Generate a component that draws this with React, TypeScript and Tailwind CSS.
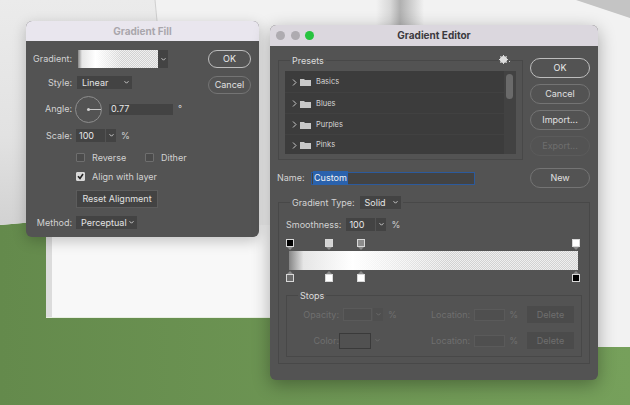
import type { ReactNode } from 'react';

/* Photoshop "Gradient Fill" + "Gradient Editor" dialogs over a paper/green photo */

const DITHER =
  'bg-[linear-gradient(90deg,#858585_0%,#e6e6e6_5%,#ffffff_22%,rgba(255,255,255,0)_55%),repeating-conic-gradient(#d2d2d2_0_25%,#f0f0f0_0_50%)] bg-[length:100%_100%,2px_2px]';

function Chevron({ dim = false }: { dim?: boolean }) {
  return (
    <svg width="7" height="5" viewBox="0 0 7 5" className="shrink-0">
      <path d="M1.5 1.2l2 2 2-2" fill="none" stroke={dim ? '#6a6a6a' : '#c8c8c8'} strokeWidth="1" />
    </svg>
  );
}

function PillButton({ label, primary, dim, className = '' }: { label: string; primary?: boolean; dim?: boolean; className?: string }) {
  return (
    <div
      className={`flex items-center justify-center rounded-full border ${
        primary ? 'border-[#bdbdbd] text-[#ececec]' : dim ? 'border-[#5b5b5b] text-[#6e6e6e]' : 'border-[#747474] text-[#e0e0e0]'
      } ${className}`}
    >
      {label}
    </div>
  );
}

function Select({ label, className = '' }: { label: string; className?: string }) {
  return (
    <div className={`flex h-[13px] items-center justify-between bg-[#434343] pl-[5px] pr-[2px] text-[#e4e4e4] ${className}`}>
      <span>{label}</span>
      <Chevron />
    </div>
  );
}

function Combo({ value, dim = false }: { value: string; dim?: boolean }) {
  return (
    <div className="flex h-[13px] items-center gap-px">
      <div className={`flex h-full w-[29px] items-center pl-[3px] ${dim ? 'border border-[#5a5a5a] bg-[#4f4f4f]' : 'bg-[#434343] text-[#e8e8e8]'}`}>{value}</div>
      <div className={`flex h-full w-[10px] items-center justify-center ${dim ? 'bg-[#4f4f4f]' : 'bg-[#434343]'}`}>
        <Chevron dim={dim} />
      </div>
    </div>
  );
}

function Checkbox({ checked = false }: { checked?: boolean }) {
  return (
    <div className={`flex size-[9px] items-center justify-center rounded-[1px] border ${checked ? 'border-[#d8d8d8] bg-[#d8d8d8]' : 'border-[#6e6e6e] bg-[#4b4b4b]'}`}>
      {checked && (
        <svg width="7" height="7" viewBox="0 0 7 7">
          <path d="M1 3.2l2 2.2L6 1" fill="none" stroke="#222" strokeWidth="1.6" />
        </svg>
      )}
    </div>
  );
}

function TitleDots() {
  return (
    <div className="absolute left-[6px] top-[6px] flex gap-[5.5px]">
      <div className="size-[9px] rounded-full bg-[#aeabb0]" />
      <div className="size-[9px] rounded-full bg-[#aeabb0]" />
      <div className="size-[9px] rounded-full bg-[#27c33f]" />
    </div>
  );
}

function Folder() {
  return (
    <svg width="11" height="8" viewBox="0 0 11 8" className="shrink-0">
      <path d="M0 1h4l1 1h6v6H0z" fill="#c8c8c8" />
    </svg>
  );
}

function PresetRow({ name, first, last }: { name: string; first?: boolean; last?: boolean }) {
  return (
    <div className={`flex items-center pl-[7px] pt-px ${first ? 'h-[21px]' : last ? 'h-[20px] border-t border-[#414141]' : 'h-[21px] border-t border-[#414141]'}`}>
      <svg width="5" height="7" viewBox="0 0 5 7" className="mr-[3px] shrink-0">
        <path d="M1 .5L4 3.5 1 6.5" fill="none" stroke="#c8c8c8" strokeWidth="1" />
      </svg>
      <Folder />
      <span className="ml-[5px] text-[7.5px] text-[#d4d4d4]">{name}</span>
    </div>
  );
}

function Stop({ left, fill, bottom }: { left: number; fill: string; bottom?: boolean }) {
  // colour/opacity stop marker on the gradient ramp
  return (
    <div className={`absolute flex -translate-x-1/2 flex-col items-center ${bottom ? 'bottom-0' : 'top-0'}`} style={{ left }}>
      {bottom && <div className="h-0 w-0 border-x-[3px] border-b-[3px] border-x-transparent border-b-[#8a8a8a]" />}
      <div className="size-[8px] border border-[#d8d8d8]" style={{ background: fill }} />
      {!bottom && <div className="h-0 w-0 border-x-[3px] border-t-[3px] border-x-transparent border-t-[#8a8a8a]" />}
    </div>
  );
}

function GroupLabel({ children, className = '' }: { children: ReactNode; className?: string }) {
  return <div className={`absolute bg-[#535353] px-[2px] ${className}`}>{children}</div>;
}

function GradientFill() {
  return (
    <div className="absolute left-[26px] top-[21px] flex h-[216px] w-[233px] flex-col overflow-hidden rounded-[6px] bg-[#535353] text-[9px] text-[#d2d2d2] shadow-[0_4px_14px_rgba(0,0,0,0.22)]">
      <div className="flex h-[20px] shrink-0 items-center justify-center bg-[#e9e6ee] text-[10px] font-bold text-[#a9a6ac]">Gradient Fill</div>
      <div className="flex flex-1">
        <div className="flex-1 pt-[9px]">
          <div className="flex h-[18px] items-center">
            <span className="w-[46px] text-right">Gradient:</span>
            <div className={`ml-[6px] h-full w-[80px] ${DITHER}`} />
            <div className="flex h-full w-[10px] items-center justify-center bg-[#434343]">
              <Chevron />
            </div>
          </div>
          <div className="mt-[8px] flex h-[13px] items-center">
            <span className="w-[46px] text-right">Style:</span>
            <Select label="Linear" className="ml-[5px] w-[55px]" />
          </div>
          <div className="mt-[7px] flex h-[26px] items-center">
            <span className="w-[46px] text-right">Angle:</span>
            <div className="relative ml-[3px] size-[27px] rounded-full border border-[#8e8e8e]">
              <div className="absolute left-[12px] top-[12px] h-px w-[13px] bg-[#c8c8c8]" />
              <div className="absolute left-[11px] top-[11px] size-[3px] rounded-full bg-[#d0d0d0]" />
            </div>
            <div className="ml-[7px] flex h-[11px] w-[64px] items-center bg-[#434343] pl-[2px] text-[#e8e8e8]">0.77</div>
            <span className="ml-[5px]">°</span>
          </div>
          <div className="mt-[7px] flex h-[13px] items-center">
            <span className="w-[46px] text-right">Scale:</span>
            <div className="ml-[4px]">
              <Combo value="100" />
            </div>
            <span className="ml-[5px]">%</span>
          </div>
          <div className="mt-[11px] flex h-[9px] items-center pl-[50px]">
            <Checkbox />
            <span className="ml-[7px] w-[53px]">Reverse</span>
            <Checkbox />
            <span className="ml-[7px]">Dither</span>
          </div>
          <div className="mt-[10px] flex h-[9px] items-center pl-[50px]">
            <Checkbox checked />
            <span className="ml-[7px]">Align with layer</span>
          </div>
          <div className="ml-[50px] mt-[9px] flex h-[18px] w-[82px] items-center justify-center border border-[#5c5c5c] bg-[#434343] text-[#e0e0e0]">Reset Alignment</div>
          <div className="mt-[8px] flex h-[13px] items-center">
            <span className="w-[46px] text-right">Method:</span>
            <Select label="Perceptual" className="ml-[4px] w-[61px]" />
          </div>
        </div>
        <div className="mr-[8px] flex w-[43px] flex-col gap-[8px] pt-[9px]">
          <PillButton label="OK" primary className="h-[18px]" />
          <PillButton label="Cancel" className="h-[18px]" />
        </div>
      </div>
    </div>
  );
}

function GradientEditor() {
  return (
    <div className="absolute left-[270px] top-[25px] flex h-[355px] w-[328px] flex-col overflow-hidden rounded-[6px] bg-[#535353] text-[9px] text-[#d2d2d2] shadow-[0_5px_18px_rgba(0,0,0,0.32)]">
      <div className="relative flex h-[21px] shrink-0 items-center justify-center bg-[#dbd7de] text-[10px] font-bold text-[#3c3a3e]">
        <TitleDots />
        Gradient Editor
      </div>
      <div className="flex h-[122px] shrink-0 pl-[8px] pr-[8px]">
        {/* presets */}
        <div className="relative mt-[14px] h-[100px] w-[245px] border border-[#484848] px-[6px] pt-[10px]">
          <GroupLabel className="-top-[7px] left-[11px] text-[#dcdcdc]">Presets</GroupLabel>
          <div className="absolute -top-[6px] right-[11px] flex h-[9px] items-end gap-[1px] bg-[#535353] px-px">
            <svg width="9" height="9" viewBox="0 0 9 9">
              <circle cx="4.5" cy="4.5" r="2.6" fill="none" stroke="#dcdcdc" strokeWidth="2" />
              <path d="M4.5 0v9M0 4.5h9M1.3 1.3l6.4 6.4M7.7 1.3L1.3 7.7" stroke="#dcdcdc" strokeWidth="1" />
            </svg>
            <div className="mb-[2px] size-px bg-[#dcdcdc]" />
          </div>
          <div className="flex h-[83px] bg-[#3c3c3c]">
            <div className="flex-1">
              <PresetRow name="Basics" first />
              <PresetRow name="Blues" />
              <PresetRow name="Purples" />
              <PresetRow name="Pinks" last />
            </div>
            <div className="w-[12px] bg-[#424242] pl-[2px] pt-[3px]">
              <div className="h-[25px] w-[7px] rounded-full bg-[#6a6a6a]" />
            </div>
          </div>
        </div>
        <div className="ml-[7px] flex w-[60px] flex-col gap-[6px] pt-[12px]">
          <PillButton label="OK" primary className="h-[20px]" />
          <PillButton label="Cancel" className="h-[20px]" />
          <PillButton label="Import..." className="h-[20px]" />
          <PillButton label="Export..." dim className="h-[20px]" />
        </div>
      </div>
      {/* name row */}
      <div className="flex h-[20px] shrink-0 items-center pl-[7px] pr-[8px]">
        <span className="w-[34px]">Name:</span>
        <div className="flex h-[13px] w-[164px] items-center border border-[#2c5a9c] bg-[#434343] pl-px">
          <span className="bg-[#2a62ad] px-px text-[#f2f2f2]">Custom</span>
        </div>
        <PillButton label="New" className="ml-auto h-[20px] w-[60px]" />
      </div>
      {/* gradient group */}
      <div className="relative mx-[8px] mt-[14px] h-[162px] w-[312px] border border-[#484848] px-[7px]">
        <GroupLabel className="-top-[7px] left-[11px] flex items-center gap-[5px]">
          <span>Gradient Type:</span>
          <Select label="Solid" className="w-[41px]" />
        </GroupLabel>
        <div className="mt-[15px] flex h-[13px] items-center">
          <span>Smoothness:</span>
          <div className="ml-[5px]">
            <Combo value="100" />
          </div>
          <span className="ml-[5px]">%</span>
        </div>
        <div className="relative mt-[8px] h-[43px] w-[296px]">
          <Stop left={4} fill="#000" />
          <Stop left={43} fill="#d4d4d4" />
          <Stop left={75} fill="#8c8c8c" />
          <Stop left={290} fill="#fff" />
          <div className={`absolute left-[3px] top-[12px] h-[19px] w-[289px] ${DITHER}`} />
          <Stop left={4} fill="#6a6a6a" bottom />
          <Stop left={43} fill="#fff" bottom />
          <Stop left={75} fill="#fff" bottom />
          <Stop left={290} fill="#000" bottom />
        </div>
        {/* stops */}
        <div className="relative mt-[13px] h-[62px] border border-[#484848] text-[#6f6f6f]">
          <GroupLabel className="-top-[7px] left-[11px] text-[#dcdcdc]">Stops</GroupLabel>
          <div className="mt-[10px] flex h-[17px] items-center">
            <span className="w-[52px] text-right">Opacity:</span>
            <div className="ml-[4px]">
              <Combo value="" dim />
            </div>
            <span className="ml-[5px]">%</span>
            <span className="ml-auto">Location:</span>
            <div className="ml-[4px] h-[12px] w-[31px] border border-[#5a5a5a] bg-[#4f4f4f]" />
            <span className="ml-[4px]">%</span>
            <div className="ml-[9px] mr-[7px] flex h-[17px] w-[47px] items-center justify-center bg-[#4b4b4b]">Delete</div>
          </div>
          <div className="mt-[9px] flex h-[17px] items-center">
            <span className="w-[52px] text-right">Color:</span>
            <div className="h-[16px] w-[32px] border border-[#3a3a3a] bg-[#515151]" />
            <div className="ml-[3px]">
              <Chevron dim />
            </div>
            <span className="ml-auto">Location:</span>
            <div className="ml-[4px] h-[12px] w-[31px] border border-[#5a5a5a] bg-[#4f4f4f]" />
            <span className="ml-[4px]">%</span>
            <div className="ml-[9px] mr-[7px] flex h-[17px] w-[47px] items-center justify-center bg-[#4b4b4b]">Delete</div>
          </div>
        </div>
      </div>
    </div>
  );
}

function Backdrop() {
  // the photo behind the dialogs
  return (
    <svg width="630" height="405" viewBox="0 0 630 405" className="absolute inset-0">
      <defs>
        <linearGradient id="green" x1="0" x2="1" y1="0" y2="0">
          <stop offset="0" stopColor="#648a4c" />
          <stop offset="1" stopColor="#76a05b" />
        </linearGradient>
        <linearGradient id="fold" x1="0" x2="1" y1="0" y2="0">
          <stop offset="0" stopColor="#f2f2f2" />
          <stop offset="0.3" stopColor="#d8d8d8" />
          <stop offset="0.5" stopColor="#b0b0b0" />
          <stop offset="0.65" stopColor="#c4c4c4" />
          <stop offset="1" stopColor="#f2f2f2" />
        </linearGradient>
        <linearGradient id="leftPaper" x1="0" x2="0" y1="0" y2="1">
          <stop offset="0" stopColor="#ebebeb" />
          <stop offset="0.6" stopColor="#e2e2e2" />
          <stop offset="1" stopColor="#d2d2d2" />
        </linearGradient>
      </defs>
      <rect width="630" height="405" fill="url(#green)" />
      <path d="M0 0H630V347H270V317H46V221L0 225Z" fill="#f2f2f2" />
      <path d="M0 0H155L157 21H46V221L0 225Z" fill="url(#leftPaper)" />
      <path d="M155 0L157 21" stroke="#cfcfcf" strokeWidth="1" />
      <rect x="376" y="0" width="48" height="30" fill="url(#fold)" />
      <path d="M576 0H630V18Z" fill="#c4c4c4" />
      <rect x="46" y="225" width="6" height="92" fill="#dcdcdc" />
      <rect x="52" y="225" width="218" height="92" fill="#f8f8f8" />
      <path d="M46 317.5H270" stroke="#e8efe2" strokeWidth="1" />
    </svg>
  );
}

export default function App() {
  return (
    <div className="relative h-[405px] w-[630px] overflow-hidden font-['Inter',sans-serif]">
      <Backdrop />
      <GradientFill />
      <GradientEditor />
    </div>
  );
}
